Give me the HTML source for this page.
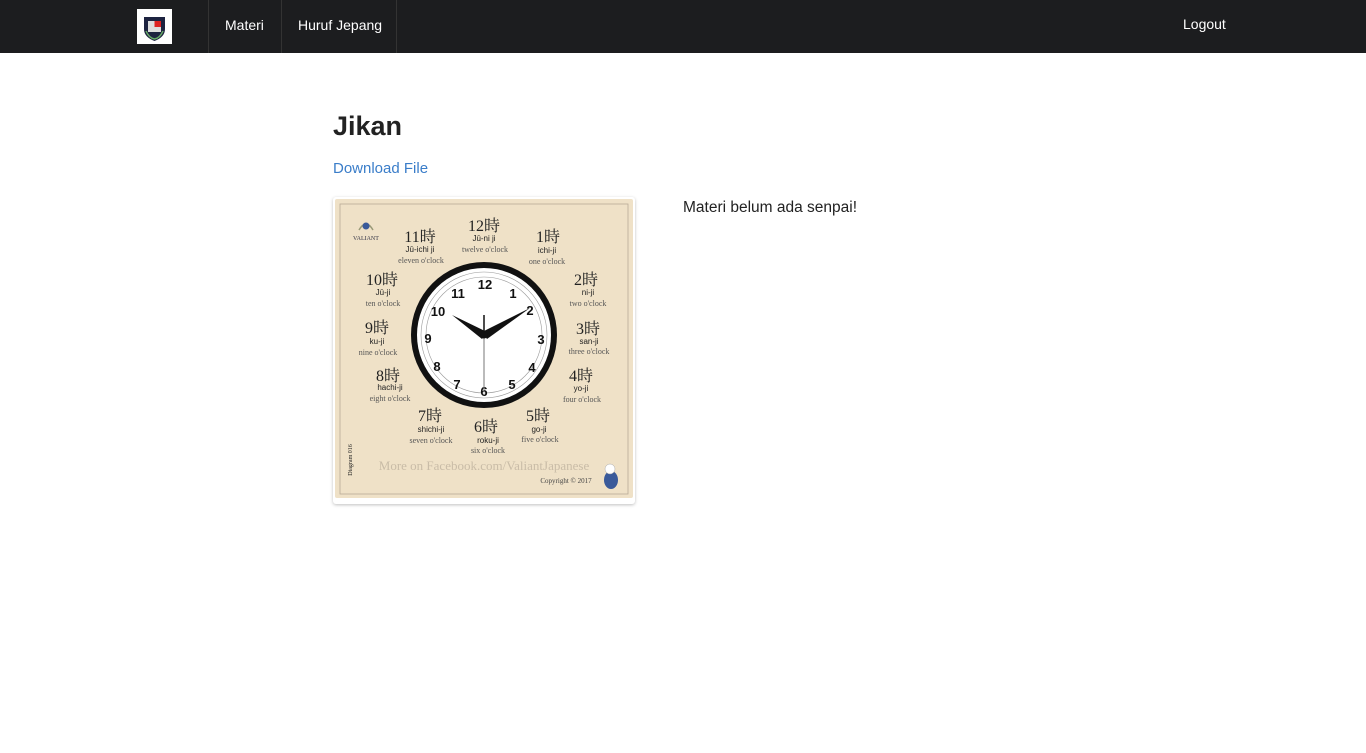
<!DOCTYPE html>
<html><head><meta charset="utf-8"><style>
*{margin:0;padding:0;box-sizing:border-box}
body{width:1366px;height:753px;background:#fff;font-family:"Liberation Sans","Noto Sans CJK JP",sans-serif;color:#222;position:relative;overflow:hidden}
.nav{position:absolute;left:0;top:0;width:1366px;height:53px;background:#1c1d1f}
.logo{position:absolute;left:137px;top:9px;width:35px;height:35px;background:#fff}
.sep{position:absolute;top:0;width:1px;height:53px;background:#333}
.nl{position:absolute;top:17px;color:#fff;font-size:14px}
h1{position:absolute;left:333px;top:111px;font-size:27px;font-weight:bold;color:#222}
.dl{position:absolute;left:333px;top:160px;font-size:15px;color:#3a7dc9}
.txt{position:absolute;left:683px;top:199px;font-size:15.5px;color:#222}
.card{position:absolute;left:333px;top:197px;width:302px;height:307px;background:#fff;border-radius:3px;box-shadow:0 1px 3px rgba(0,0,0,.25)}
svg{position:absolute;left:333px;top:197px}
</style></head><body>
<div class="nav">
 <div class="logo"><svg width="35" height="35" style="position:absolute;left:0;top:0"><path d="M7 8 L28 8 L28 20 Q28 28 17.5 32 Q7 28 7 20Z" fill="#1d2340"/><rect x="11" y="12" width="13" height="11" fill="#ddd"/><rect x="17.5" y="12" width="6.5" height="6" fill="#d22"/><path d="M9 22 Q12 29 17.5 30 Q23 29 26 22" fill="none" stroke="#6a6" stroke-width="1.5"/></svg></div>
 <div class="sep" style="left:208px"></div><div class="sep" style="left:281px"></div><div class="sep" style="left:396px"></div>
 <div class="nl" style="left:225px">Materi</div>
 <div class="nl" style="left:298px">Huruf Jepang</div>
 <div class="nl" style="left:1183px;top:16px">Logout</div>
</div>
<h1>Jikan</h1>
<div class="dl">Download File</div>
<div class="txt">Materi belum ada senpai!</div>
<div class="card"></div>
<svg width="302" height="307" viewBox="333 197 302 307">
<rect x="335" y="199" width="298" height="299" fill="#efe1c7" rx="2"/>
<rect x="340" y="204" width="288" height="290" fill="none" stroke="#b8ab96" stroke-width="0.8"/>
<g font-family="Liberation Serif,Noto Serif CJK SC,serif" fill="#222" text-anchor="middle">
<g font-size="16"><text x="420" y="242">11時</text><text x="484" y="231">12時</text><text x="548" y="242">1時</text><text x="586" y="285">2時</text><text x="588" y="334">3時</text><text x="581" y="381">4時</text><text x="538" y="421">5時</text><text x="486" y="432">6時</text><text x="430" y="421">7時</text><text x="388" y="381">8時</text><text x="377" y="333">9時</text><text x="382" y="285">10時</text></g>
<g font-family="Liberation Sans,sans-serif" font-size="8"><text x="420" y="252">Jū-ichi ji</text><text x="484" y="241">Jū-ni ji</text><text x="547" y="253">ichi-ji</text><text x="588" y="295">ni-ji</text><text x="589" y="344">san-ji</text><text x="581" y="391">yo-ji</text><text x="539" y="432">go-ji</text><text x="488" y="443">roku-ji</text><text x="431" y="432">shichi-ji</text><text x="390" y="390">hachi-ji</text><text x="377" y="344">ku-ji</text><text x="383" y="295">Jū-ji</text></g>
<g font-size="8" fill="#555"><text x="421" y="263">eleven o'clock</text><text x="485" y="252">twelve o'clock</text><text x="547" y="264">one o'clock</text><text x="588" y="306">two o'clock</text><text x="589" y="354">three o'clock</text><text x="582" y="402">four o'clock</text><text x="540" y="442">five o'clock</text><text x="488" y="453">six o'clock</text><text x="431" y="443">seven o'clock</text><text x="390" y="401">eight o'clock</text><text x="378" y="355">nine o'clock</text><text x="383" y="306">ten o'clock</text></g>
<text x="484" y="470" font-size="13" fill="#c9bca7">More on Facebook.com/ValiantJapanese</text>
<text x="566" y="483" font-size="7" fill="#444">Copyright © 2017</text>
<text x="366" y="240" font-size="6" fill="#334">VALIANT</text>
<text transform="translate(352,460) rotate(-90)" font-size="6">Diagram 016</text>
</g>
<path d="M359 230 Q366 218 373 230" fill="none" stroke="#997" stroke-width="1.5"/><circle cx="366" cy="226" r="3.5" fill="#3a5a9a"/>
<ellipse cx="611" cy="480" rx="7" ry="9" fill="#3a5a9a"/><circle cx="610" cy="469" r="5" fill="#fff" stroke="#aaa" stroke-width=".5"/>
<circle cx="484" cy="335" r="73" fill="#111"/>
<circle cx="484" cy="335" r="67" fill="#fff"/>
<circle cx="484" cy="335" r="63" fill="none" stroke="#999" stroke-width="0.6"/>
<circle cx="484" cy="335" r="58" fill="none" stroke="#999" stroke-width="0.6"/>
<g font-family="Liberation Sans,sans-serif" font-weight="bold" font-size="13" fill="#111" text-anchor="middle">
<text x="485" y="289">12</text><text x="513" y="298">1</text><text x="530" y="315">2</text><text x="541" y="344">3</text><text x="532" y="372">4</text><text x="512" y="389">5</text><text x="484" y="396">6</text><text x="457" y="389">7</text><text x="437" y="371">8</text><text x="428" y="343">9</text><text x="438" y="316">10</text><text x="458" y="298">11</text></g>
<path d="M452 315 L487 332 L482 339Z" fill="#111"/>
<path d="M530 308 L487 339 L482 332Z" fill="#111"/>
<path d="M484 315 L484 338" stroke="#111" stroke-width="1.5"/>
<path d="M484 335 L484 390" stroke="#777" stroke-width="1"/>
<circle cx="484" cy="335" r="3.5" fill="#111"/>
</svg>
</body></html>
